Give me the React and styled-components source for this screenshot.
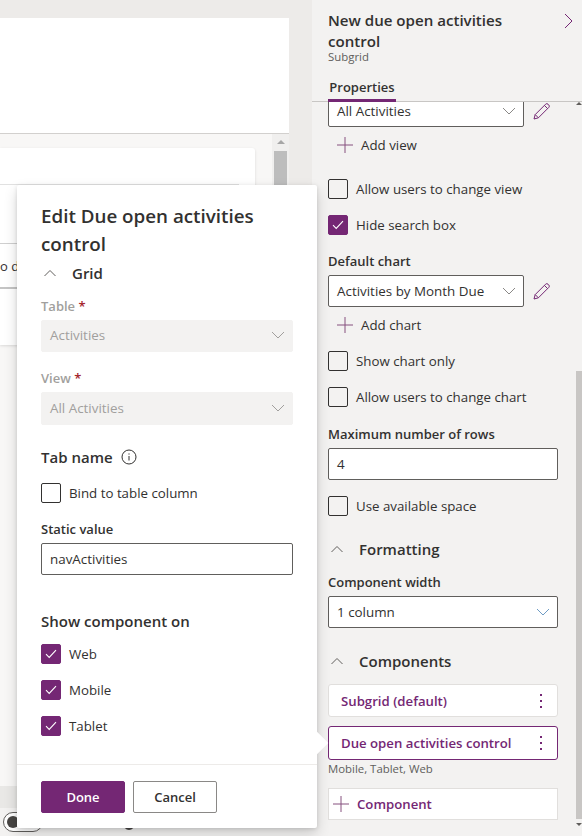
import styled, { createGlobalStyle } from 'styled-components';

const GlobalStyle = createGlobalStyle`
  html, body {
    margin: 0;
    padding: 0;
    overflow: hidden;
  }
  body {
    font-family: "Open Sans", "Noto Sans", "Liberation Sans", sans-serif;
    color: #323130;
  }
`;

const Page = styled.div`
  position: relative;
  display: flex;
  width: 582px;
  height: 836px;
  overflow: hidden;
  background: #f3f2f1;
`;

/* left side, the form canvas behind the dialog */
const Canvas = styled.div`
  display: flex;
  flex-direction: column;
  width: 312px;
  flex: none;
  background: #edebe9;
  border-right: 1px solid #e1dfdd;
  box-sizing: content-box;
  margin-right: -1px;
`;

const Stage = styled.div`
  display: flex;
  flex-direction: column;
  flex: 1;
  padding: 18px 23px 0 0;
  min-height: 0;
`;

const Banner = styled.div`
  height: 115px;
  flex: none;
  background: #fff;
  border-bottom: 1px solid #d2d0ce;
`;

const Scroller = styled.div`
  display: flex;
  flex: 1;
  min-height: 0;
  background: #f8f7f6;
`;

const ScrollerBody = styled.div`
  flex: 1;
  padding: 14px 17px 0 0;
`;

const FormCard = styled.div`
  height: 197px;
  background: #fff;
  border-radius: 0 3px 3px 0;
  box-shadow: 0 1px 3px rgba(0, 0, 0, 0.12);
  padding-top: 36px;
  box-sizing: border-box;
`;

const CardLine = styled.div`
  height: ${(p) => p.$height || 1}px;
  margin-top: ${(p) => p.$top || 0}px;
  margin-right: 16px;
  background: ${(p) => p.$color};
`;

const CutText = styled.div`
  height: 43px;
  padding-top: 13px;
  box-sizing: border-box;
  font-size: 13px;
  line-height: 18px;
  white-space: nowrap;
`;

const CanvasRail = styled.div`
  width: 17px;
  flex: none;
  background: #f0efee;
  display: flex;
  flex-direction: column;
  align-items: center;
`;

const RailArrow = styled.div`
  width: 0;
  height: 0;
  margin-top: 6px;
  border-left: 4px solid transparent;
  border-right: 4px solid transparent;
  border-bottom: 4px solid #a6a6a6;
`;

const CanvasThumb = styled.div`
  width: 13px;
  height: 200px;
  margin-top: 7px;
  background: #bdbdbd;
`;

const BottomBand = styled.div`
  height: 22px;
  flex: none;
  background: #e9e8e6;
`;

const StatusBar = styled.div`
  height: 28px;
  flex: none;
  background: #f3f2f1;
  display: flex;
  align-items: flex-start;
  padding: 4px 0 0 3px;
  box-sizing: border-box;
`;

const Toggle = styled.div`
  width: 40px;
  height: 20px;
  flex: none;
  border: 1px solid #605e5c;
  border-radius: 11px;
  box-sizing: border-box;
  padding: 3px;
  background: #fff;
`;

const ToggleKnob = styled.div`
  width: 12px;
  height: 12px;
  border-radius: 50%;
  background: #484644;
`;

const StatusDot = styled.div`
  width: 12px;
  height: 14px;
  flex: none;
  margin: 4px 0 0 80px;
  border-radius: 50%;
  background: #484644;
`;

const StatusTick = styled.div`
  width: 1px;
  height: 4px;
  flex: none;
  margin: 11px 0 0 153px;
  background: #8a7fc0;
`;

/* right side, properties panel */
const Panel = styled.aside`
  display: flex;
  flex-direction: column;
  flex: 1;
  min-width: 0;
  background: #f3f2f1;
`;

const PanelHead = styled.header`
  position: relative;
  height: 102px;
  flex: none;
  box-sizing: border-box;
  border-bottom: 1px solid #c8c6c4;
  padding: 10px 0 0 16px;
`;

const PanelTitle = styled.h2`
  margin: 0;
  width: 210px;
  font-size: 15.1px;
  font-weight: 600;
  line-height: 21px;
`;

const PanelSub = styled.div`
  font-size: 11.4px;
  line-height: 10px;
  color: #605e5c;
`;

const Collapse = styled.svg`
  position: absolute;
  top: 13px;
  right: 9px;
`;

const TabLabel = styled.div`
  position: absolute;
  left: 16px;
  bottom: -1px;
  width: 68px;
  height: 28px;
  box-sizing: border-box;
  padding-top: 3px;
  border-bottom: 3px solid #742774;
  font-size: 13px;
  font-weight: 600;
  line-height: 20px;
  text-align: center;
`;

const PanelBody = styled.div`
  display: flex;
  flex: 1;
  min-height: 0;
`;

const Content = styled.div`
  width: 230px;
  flex: none;
  margin-left: 16px;
  overflow: hidden;
`;

const Clip = styled.div`
  margin-top: -7px;
`;

const PanelRail = styled.div`
  width: 6px;
  flex: none;
  margin-left: 18px;
  display: flex;
  flex-direction: column;
  align-items: center;
`;

const PanelThumb = styled.div`
  width: 6px;
  height: 448px;
  margin-top: 266px;
  background: #c8c6c4;
`;

const MiniArrow = styled.div`
  width: 0;
  height: 0;
  margin-top: ${(p) => p.$top}px;
  border-left: 3px solid transparent;
  border-right: 3px solid transparent;
  ${(p) => (p.$down ? 'border-top' : 'border-bottom')}: 3px solid #605e5c;
`;

const SelectRow = styled.div`
  display: flex;
  align-items: center;
  margin-top: ${(p) => p.$top || 0}px;
`;

const Select = styled.div`
  display: flex;
  align-items: center;
  justify-content: space-between;
  width: ${(p) => p.$width}px;
  height: ${(p) => p.$height || 32}px;
  margin-top: ${(p) => p.$top || 0}px;
  box-sizing: border-box;
  padding: 0 7px 0 8px;
  padding-bottom: ${(p) => (p.$disabled ? 2 : 0)}px;
  border: 1px solid ${(p) => (p.$disabled ? '#f3f2f1' : '#605e5c')};
  border-radius: 2px;
  background: ${(p) => (p.$disabled ? '#f3f2f1' : '#fff')};
  color: ${(p) => (p.$disabled ? '#a19f9d' : '#323130')};
  font-size: 13.4px;
`;

const TextInput = styled(Select)`
  justify-content: flex-start;
`;

const EditIcon = styled.svg`
  margin-left: 9px;
  flex: none;
`;

const AddRow = styled.div`
  display: flex;
  align-items: center;
  gap: 8px;
  height: 32px;
  margin-top: 2px;
  padding-left: 9px;
  font-size: 13.3px;
`;

const CheckRow = styled.label`
  display: flex;
  align-items: center;
  gap: 8px;
  height: 20px;
  margin-top: ${(p) => p.$top || 0}px;
  font-size: 13.3px;
`;

const Box = styled.span`
  display: flex;
  align-items: center;
  justify-content: center;
  width: 20px;
  height: 20px;
  flex: none;
  box-sizing: border-box;
  border: 1px solid ${(p) => (p.$checked ? '#742774' : '#323130')};
  border-radius: 2px;
  background: ${(p) => (p.$checked ? '#742774' : 'transparent')};
`;

const Label = styled.div`
  height: 20px;
  margin-top: ${(p) => p.$top || 0}px;
  font-size: 13px;
  font-weight: 600;
  line-height: 20px;
  color: ${(p) => (p.$disabled ? '#a19f9d' : '#323130')};
`;

const Star = styled.span`
  color: #a4262c;
`;

const Section = styled.div`
  display: flex;
  align-items: center;
  height: 24px;
  margin-top: ${(p) => p.$top || 0}px;
  font-size: 15px;
  font-weight: 600;
`;

const SectionChevron = styled.svg`
  margin: 0 16px 0 3px;
  flex: none;
`;

const CompCard = styled.div`
  display: flex;
  align-items: center;
  justify-content: space-between;
  height: ${(p) => p.$height}px;
  margin-top: ${(p) => p.$top}px;
  box-sizing: border-box;
  padding: 0 15px 0 12px;
  background: #fff;
  border: 1px solid ${(p) => (p.$active ? '#742774' : '#e1dfdd')};
  border-radius: 3px;
  color: #742774;
  font-size: 13.2px;
  font-weight: 600;
`;

const Dots = styled.div`
  display: flex;
  flex-direction: column;
  gap: 4px;
`;

const Dot = styled.span`
  width: 2px;
  height: 2px;
  background: #742774;
`;

const Note = styled.div`
  height: 16px;
  margin-top: 1px;
  font-size: 11.4px;
  line-height: 16px;
  color: #605e5c;
`;

const AddComponent = styled.div`
  display: flex;
  align-items: center;
  gap: 8px;
  height: 32px;
  margin-top: 11px;
  box-sizing: border-box;
  padding-left: 4px;
  background: #fff;
  border: 1px solid #e1dfdd;
  color: #742774;
  font-size: 13.2px;
  font-weight: 600;
`;

/* dialog that floats over canvas and panel */
const Callout = styled.section`
  position: absolute;
  left: 17px;
  top: 185px;
  width: 300px;
  z-index: 2;
  background: #fff;
  border-radius: 2px;
  box-shadow: 0 6px 14px rgba(0, 0, 0, 0.16), 0 1px 4px rgba(0, 0, 0, 0.12);
`;

const Beak = styled.div`
  position: absolute;
  left: 292px;
  top: 550px;
  width: 16px;
  height: 16px;
  transform: rotate(45deg);
  background: #fff;
`;

const CalloutBody = styled.div`
  position: relative;
  padding: 17px 24px 28px;
`;

const CalloutTitle = styled.h1`
  margin: 0;
  font-size: 18.8px;
  font-weight: 600;
  line-height: 28px;
`;

const Footer = styled.footer`
  position: relative;
  display: flex;
  gap: 8px;
  padding: 16px 24px 15px;
  border-top: 1px solid #edebe9;
`;

const Button = styled.button`
  width: 84px;
  height: 32px;
  padding: 0;
  border: 1px solid ${(p) => (p.$primary ? '#742774' : '#8a8886')};
  border-radius: 2px;
  background: ${(p) => (p.$primary ? '#742774' : '#fff')};
  color: ${(p) => (p.$primary ? '#fff' : '#323130')};
  font-family: inherit;
  font-size: 13px;
  font-weight: 600;
`;

const InfoIcon = styled.svg`
  margin-left: 8px;
`;

const Chevron = ({ color = '#8a8886' }) => (
  <svg width="14" height="8" viewBox="0 0 14 8" fill="none">
    <path d="M1 1l6 6 6-6" stroke={color} strokeWidth="1" />
  </svg>
);

const ChevronUp = () => (
  <SectionChevron width="12" height="8" viewBox="0 0 12 8" fill="none">
    <path d="M.5 7 6 1.5 11.5 7" stroke="#605e5c" strokeWidth="1" />
  </SectionChevron>
);

const Plus = () => (
  <svg width="16" height="16" viewBox="0 0 16 16" fill="none">
    <path d="M0 8h16M8 0v16" stroke="#86507f" strokeWidth="1" />
  </svg>
);

const Pencil = () => (
  <EditIcon width="17" height="17" viewBox="0 0 17 17" fill="none">
    <path
      d="M1 16l1.2-4.4L12.6 1.2a1.7 1.7 0 0 1 2.4 0l.8.8a1.7 1.7 0 0 1 0 2.4L5.4 14.8 1 16zM2.2 11.6l3.2 3.2M11.4 2.4l3.2 3.2"
      stroke="#742774"
      strokeWidth="1"
      strokeLinejoin="round"
    />
  </EditIcon>
);

const Check = ({ label, checked, top }) => (
  <CheckRow $top={top}>
    <Box $checked={checked}>
      {checked && (
        <svg width="12" height="10" viewBox="0 0 12 10" fill="none">
          <path d="M1 5.2 4.2 8.4 11 1.2" stroke="#fff" strokeWidth="1.1" />
        </svg>
      )}
    </Box>
    {label}
  </CheckRow>
);

const ComponentCard = ({ label, height, top, active }) => (
  <CompCard $height={height} $top={top} $active={active}>
    {label}
    <Dots>
      <Dot />
      <Dot />
      <Dot />
    </Dots>
  </CompCard>
);

export default function App() {
  return (
    <Page>
      <GlobalStyle />
      <Canvas>
        <Stage>
          <Banner />
          <Scroller>
            <ScrollerBody>
              <FormCard>
                <CardLine $color="#e1e1e1" />
                <CardLine $color="#cfcfcf" $top={58} />
                <CutText>o d</CutText>
                <CardLine $color="#c4c4c4" $height={2} />
              </FormCard>
            </ScrollerBody>
            <CanvasRail>
              <RailArrow />
              <CanvasThumb />
            </CanvasRail>
          </Scroller>
          <BottomBand />
        </Stage>
        <StatusBar>
          <Toggle>
            <ToggleKnob />
          </Toggle>
          <StatusDot />
          <StatusTick />
        </StatusBar>
      </Canvas>

      <Panel>
        <PanelHead>
          <PanelTitle>New due open activities control</PanelTitle>
          <PanelSub>Subgrid</PanelSub>
          <TabLabel>Properties</TabLabel>
          <Collapse width="9" height="16" viewBox="0 0 9 16" fill="none">
            <path d="M1 1l7 7-7 7" stroke="#742774" strokeWidth="1" />
          </Collapse>
        </PanelHead>
        <PanelBody>
          <Content>
            <Clip>
              <SelectRow>
                <Select $width={196}>
                  All Activities
                  <Chevron />
                </Select>
                <Pencil />
              </SelectRow>
              <AddRow>
                <Plus />
                Add view
              </AddRow>
              <Check label="Allow users to change view" top={18} />
              <Check label="Hide search box" checked top={16} />
              <Label $top={16}>Default chart</Label>
              <SelectRow $top={4}>
                <Select $width={196}>
                  Activities by Month Due
                  <Chevron />
                </Select>
                <Pencil />
              </SelectRow>
              <AddRow>
                <Plus />
                Add chart
              </AddRow>
              <Check label="Show chart only" top={10} />
              <Check label="Allow users to change chart" top={16} />
              <Label $top={17}>Maximum number of rows</Label>
              <TextInput $width={230} $top={4}>4</TextInput>
              <Check label="Use available space" top={16} />
              <Section $top={21}>
                <ChevronUp />
                Formatting
              </Section>
              <Label $top={11}>Component width</Label>
              <Select $width={230} $top={4}>
                1 column
                <Chevron color="#6f9cc4" />
              </Select>
              <Section $top={21}>
                <ChevronUp />
                Components
              </Section>
              <ComponentCard label="Subgrid (default)" height={33} top={11} />
              <ComponentCard label="Due open activities control" height={34} top={9} active />
              <Note>Mobile, Tablet, Web</Note>
              <AddComponent>
                <Plus />
                Component
              </AddComponent>
            </Clip>
          </Content>
          <PanelRail>
            <MiniArrow $top={0} />
            <PanelThumb />
            <MiniArrow $top={4} $down />
          </PanelRail>
        </PanelBody>
      </Panel>

      <Callout>
        <Beak />
        <CalloutBody>
          <CalloutTitle>Edit Due open activities control</CalloutTitle>
          <Section $top={3}>
            <ChevronUp />
            Grid
          </Section>
          <Label $top={11} $disabled>
            Table <Star>*</Star>
          </Label>
          <Select $width={252} $top={4} $disabled>
            Activities
            <Chevron color="#a19f9d" />
          </Select>
          <Label $top={16} $disabled>
            View <Star>*</Star>
          </Label>
          <Select $width={252} $height={33} $top={4} $disabled>
            All Activities
            <Chevron color="#a19f9d" />
          </Select>
          <Section $top={20}>
            Tab name
            <InfoIcon width="16" height="16" viewBox="0 0 16 16" fill="none">
              <circle cx="8" cy="8" r="7" stroke="#323130" strokeWidth="1" />
              <path d="M8 7v4.5M8 4.4v1.2" stroke="#323130" strokeWidth="1" />
            </InfoIcon>
          </Section>
          <Check label="Bind to table column" top={14} />
          <Label $top={16}>Static value</Label>
          <TextInput $width={252} $top={4}>navActivities</TextInput>
          <Section $top={34}>Show component on</Section>
          <Check label="Web" checked top={11} />
          <Check label="Mobile" checked top={16} />
          <Check label="Tablet" checked top={16} />
        </CalloutBody>
        <Footer>
          <Button $primary>Done</Button>
          <Button>Cancel</Button>
        </Footer>
      </Callout>
    </Page>
  );
}
